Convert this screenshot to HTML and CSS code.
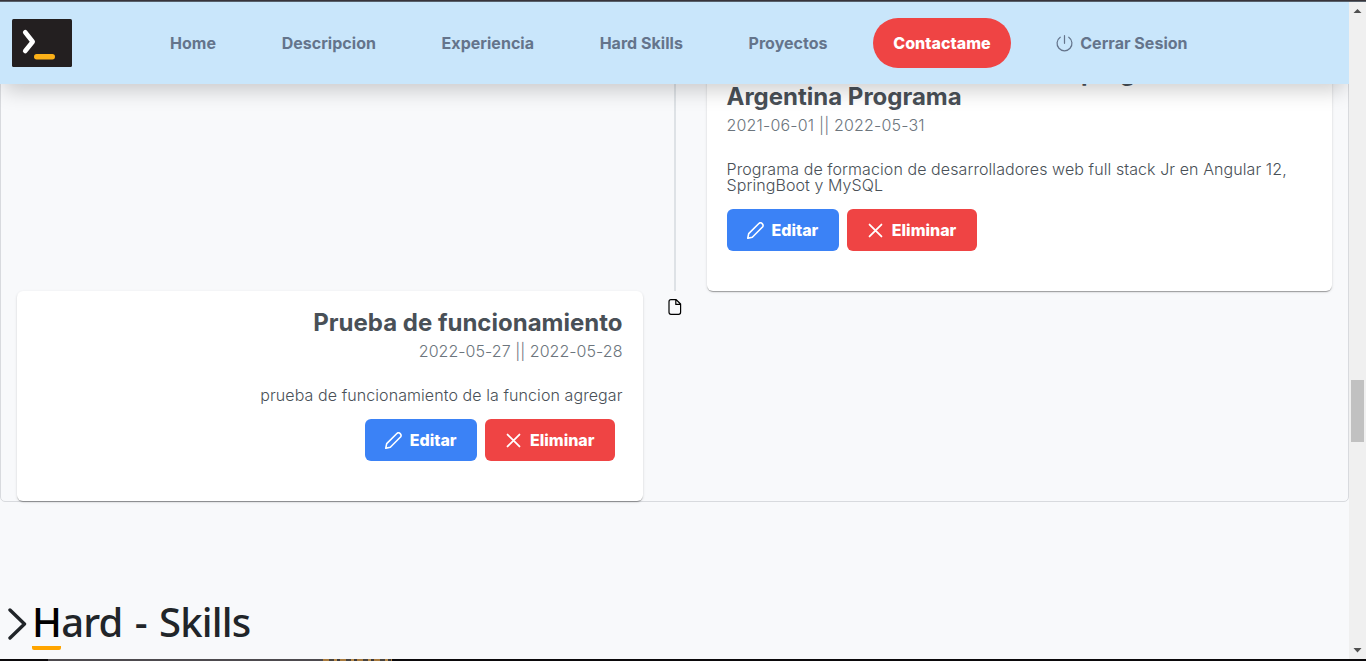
FILE: index.html
```html
<!DOCTYPE html>
<html lang="es">
<head>
<meta charset="utf-8">
<title>Portfolio</title>
<link rel="stylesheet" href="styles.css">
</head>
<body>
<div class="edge-top"></div>
<div class="viewport">
  <div class="page">
    <header class="navbar">
      <svg class="logo" viewBox="0 0 60 48" width="60" height="48"><rect width="60" height="48" rx="1.5" fill="#231f20"/><path d="M13.2 13.2 20.7 22.7 13.2 32" fill="none" stroke="#fff" stroke-width="4.6" stroke-linecap="round" stroke-linejoin="round"/><rect x="22" y="35" width="21" height="5.4" rx="2.7" fill="#fbb018"/></svg>
      <nav class="menu">
        <a class="link">Home</a>
        <a class="link">Descripcion</a>
        <a class="link">Experiencia</a>
        <a class="link">Hard Skills</a>
        <a class="link">Proyectos</a>
        <a class="contact">Contactame</a>
        <a class="link logout"><svg class="icon-power" viewBox="0 0 16 16" width="17" height="17"><path d="M8 .6v7.2M4 2.1a7 7 0 1 0 8 0" fill="none" stroke="currentColor" stroke-width="1.15" stroke-linecap="round"/></svg>Cerrar Sesion</a>
      </nav>
    </header>
    <main class="content">
      <section class="timeline">
        <div class="event event-right">
          <div class="side"></div>
          <div class="separator"><div class="connector"></div></div>
          <article class="card">
            <h2 class="title">Desarrollador Full Stack Jr. en programa<br>Argentina Programa</h2>
            <p class="dates">2021-06-01 || 2022-05-31</p>
            <p class="text">Programa de formacion de desarrolladores web full stack Jr en Angular 12, SpringBoot y MySQL</p>
            <div class="actions">
              <button class="btn edit"><svg class="icon" viewBox="0 0 16 16" width="17" height="17"><path d="M.7 15.3 1.6 10.9 11.4 1.2Q12.9 0 14.3 1.5T14.8 4.5L5 14.3Z" fill="none" stroke="currentColor" stroke-width="1.5" stroke-linejoin="round"/></svg>Editar</button>
              <button class="btn remove"><svg class="icon" viewBox="0 0 16 16" width="17" height="17"><path d="M2.4 2.4 13.6 13.6M13.6 2.4 2.4 13.6" stroke="currentColor" stroke-width="1.7" stroke-linecap="round"/></svg>Eliminar</button>
            </div>
          </article>
        </div>
        <div class="event event-left">
          <article class="card">
            <h2 class="title">Prueba de funcionamiento</h2>
            <p class="dates">2022-05-27 || 2022-05-28</p>
            <p class="text">prueba de funcionamiento de la funcion agregar</p>
            <div class="actions">
              <button class="btn edit"><svg class="icon" viewBox="0 0 16 16" width="17" height="17"><path d="M.7 15.3 1.6 10.9 11.4 1.2Q12.9 0 14.3 1.5T14.8 4.5L5 14.3Z" fill="none" stroke="currentColor" stroke-width="1.5" stroke-linejoin="round"/></svg>Editar</button>
              <button class="btn remove"><svg class="icon" viewBox="0 0 16 16" width="17" height="17"><path d="M2.4 2.4 13.6 13.6M13.6 2.4 2.4 13.6" stroke="currentColor" stroke-width="1.7" stroke-linecap="round"/></svg>Eliminar</button>
            </div>
          </article>
          <div class="separator"><svg class="icon-file" viewBox="0 0 14 16" width="14" height="16"><path d="M3 .7H8.2L12.6 5V13.3Q12.6 15.3 10.6 15.3H3Q1 15.3 1 13.3V2.7Q1 .7 3 .7ZM7.8.9V5.4H12.4" fill="none" stroke="#000" stroke-width="1.2" stroke-linejoin="round"/></svg></div>
          <div class="side"></div>
        </div>
      </section>
      <h1 class="heading"><svg class="chevron" viewBox="0 0 19 32" width="19" height="32"><path d="M2 2 16.5 16 2 30" fill="none" stroke="#212529" stroke-width="3.4" stroke-linecap="round" stroke-linejoin="round"/></svg><span class="initial">H</span>ard - Skills</h1>
    </main>
  </div>
  <div class="scrollbar">
    <svg class="arrow" viewBox="0 0 17 17" width="17" height="17"><path d="M4.5 11h8L8.5 7z" fill="#505050"/></svg>
    <div class="thumb"></div>
    <svg class="arrow arrow-down" viewBox="0 0 17 17" width="17" height="17"><path d="M4.5 6h8L8.5 10.5z" fill="#505050"/></svg>
  </div>
</div>
<div class="edge-bottom"><i class="dark"></i><i class="gray"></i><i class="amber"></i><i class="dark rest"></i></div>
</body>
</html>
```
FILE: styles.css
```css
* { box-sizing: border-box; margin: 0; }
body { height: 661px; display: flex; flex-direction: column; overflow: hidden; background: #f8f9fb; font-family: Inter, "Liberation Sans", sans-serif; font-size: 16px; color: #495057; }
.edge-top { height: 2px; flex: none; background: linear-gradient(#38343a 50%, #57606a 50%); }
.viewport { flex: 1; min-height: 0; display: flex; }
.page { width: 1349px; display: flex; flex-direction: column; overflow: hidden; }
.navbar { position: relative; z-index: 1; flex: none; height: 82px; display: flex; align-items: center; padding-left: 12px; background: #c9e6fb; box-shadow: 0 10px 20px -4px rgba(0, 0, 0, .2); }
.logo { display: block; }
.menu { display: flex; align-items: center; gap: 25.6px; margin-left: 78px; font-weight: 700; letter-spacing: .03px; }
.link { padding: 0 20px; color: #64748b; white-space: nowrap; }
.contact { height: 50px; padding: 0 20px; line-height: 50px; border-radius: 25px; background: #ef4444; color: #fff; font-weight: 800; }
.logout { display: flex; align-items: center; }
.icon-power { margin-right: 7px; }
.content { flex: 1; min-height: 0; overflow: hidden; }
.timeline { height: 461px; margin-top: -43px; border: 1px solid #d8dade; border-radius: 0 0 5px 5px; padding: 0 16px; }
.event { display: grid; grid-template-columns: 1fr 64px 1fr; }
.separator { display: flex; justify-content: center; }
.connector { width: 2px; background: #dee2e6; }
.card { padding: 20px; border-radius: 6px; background: #fff; box-shadow: 0 2px 1px -1px rgba(0, 0, 0, .2), 0 1px 1px rgba(0, 0, 0, .14), 0 1px 3px rgba(0, 0, 0, .12); }
.event-right { height: 250px; margin-top: -1px; }
.event-left .card { height: 210px; text-align: right; }
.title { font-size: 24px; font-weight: 700; line-height: 24px; }
.dates { margin-top: 6px; line-height: 20px; color: #6c757d; font-weight: 360; letter-spacing: .18px; }
.event-left .dates { letter-spacing: .04px; }
.text { margin-top: 26px; line-height: 16px; font-weight: 360; letter-spacing: .08px; }
.actions { display: flex; gap: 8px; margin-top: 16px; }
.event-left .actions { justify-content: flex-end; margin-right: 7.5px; }
.btn { height: 42px; display: flex; align-items: center; border: 0; border-radius: 6px; padding: 0 20.5px 0 20px; color: #fff; font: 800 16px Inter, sans-serif; }
.icon { margin-right: 8px; }
.edit { background: #3b82f6; }
.remove { background: #ef4444; }
.icon-file { margin-top: 8px; }
.heading { display: flex; align-items: flex-start; margin: 92px 0 0 8px; color: #212529; font: 500 40px/56px "Noto Sans", sans-serif; letter-spacing: -.8px; word-spacing: 2.6px; white-space: pre; }
.chevron { margin: 14px 5px 0 0; }
.initial { position: relative; color: #000; }
.initial::after { content: ""; position: absolute; left: 0; top: 52px; width: 29px; height: 4px; border-radius: 0 0 2px 2px; background: orange; }
.scrollbar { width: 17px; display: flex; flex-direction: column; background: #f0f0f0; }
.thumb { width: 13px; height: 62px; margin: 361px 0 0 2px; background: #c1c1c1; }
.arrow { display: block; }
.arrow-down { margin-top: auto; }
.edge-bottom { height: 2px; flex: none; display: flex; }
.dark { width: 48px; background: #0b090b; }
.gray { width: 275px; background: #4d4a4e; }
.amber { width: 69px; background: repeating-linear-gradient(90deg, #a97b3e 0 6px, #49443f 6px 11px, #b98b4b 11px 14px, #3d3a3b 14px 17px); }
.rest { flex: 1; }
```
